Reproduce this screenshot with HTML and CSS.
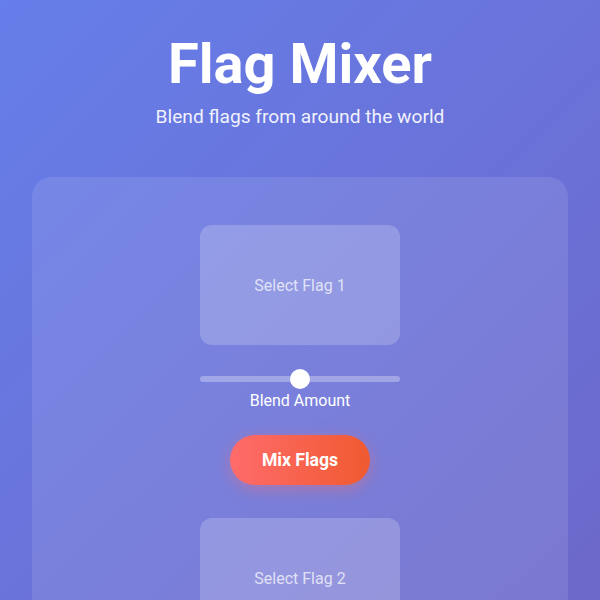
FILE: index.html
```html
<!DOCTYPE html>
<html lang="en">
<head>
<meta charset="utf-8">
<title>Flag Mixer</title>
<link rel="stylesheet" href="styles.css">
</head>
<body>
<div class="app">
  <header class="header">
    <h1 class="title">Flag Mixer</h1>
    <p class="subtitle">Blend flags from around the world</p>
  </header>
  <main class="card">
    <div class="flag-box">Select Flag 1</div>
    <div class="blend">
      <input class="slider" type="range" min="0" max="100" value="50">
      <label class="blend-label">Blend Amount</label>
    </div>
    <button class="mix-btn">Mix Flags</button>
    <div class="flag-box flag-two">Select Flag 2</div>
  </main>
</div>
</body>
</html>
```

FILE: styles.css
```css
html {
  overflow: hidden;
  background: linear-gradient(135deg, #667eea 0%, #6d68ca 100%) fixed;
}
body {
  margin: 0;
  font-family: Roboto, "Noto Sans", "Liberation Sans", sans-serif;
  color: #fff;
}
.app {
  padding: 31px 32px 0;
}
.header {
  text-align: center;
}
.title {
  margin: 0;
  font-size: 56px;
  line-height: 1.2;
  font-weight: 700;
  color: #fff;
}
.subtitle {
  margin: 5px 0 0;
  font-size: 19.2px;
  line-height: 1.5;
  color: rgba(255, 255, 255, 0.92);
}
.card {
  margin-top: 45px;
  padding: 48px 32px;
  border-radius: 20px;
  background: rgba(255, 255, 255, 0.1);
  display: flex;
  flex-direction: column;
  align-items: center;
}
.flag-box {
  width: 200px;
  height: 120px;
  border-radius: 12px;
  background: rgba(255, 255, 255, 0.2);
  display: flex;
  align-items: center;
  justify-content: center;
  padding-top: 1px;
  box-sizing: border-box;
  font-size: 16px;
  color: rgba(255, 255, 255, 0.72);
}
.blend {
  margin-top: 24px;
  display: flex;
  flex-direction: column;
  align-items: center;
}
.slider {
  -webkit-appearance: none;
  appearance: none;
  width: 200px;
  height: 20px;
  margin: 0;
  background: transparent;
}
.slider::-webkit-slider-runnable-track {
  height: 6px;
  border-radius: 3px;
  background: rgba(255, 255, 255, 0.3);
}
.slider::-webkit-slider-thumb {
  -webkit-appearance: none;
  width: 20px;
  height: 20px;
  margin-top: -7px;
  border-radius: 50%;
  background: #fff;
  border: none;
}
.blend-label {
  margin-top: 2px;
  font-size: 16px;
  color: #fff;
}
.mix-btn {
  margin-top: 25px;
  padding: 15px 32px;
  border: none;
  border-radius: 26px;
  background: linear-gradient(90deg, #ff6b6b 0%, #f05a30 100%);
  box-shadow: 0 4px 15px rgba(255, 107, 107, 0.4);
  font-family: inherit;
  font-size: 17.6px;
  line-height: normal;
  font-weight: 700;
  color: #fff;
}
.flag-two {
  margin-top: 33px;
}
```
